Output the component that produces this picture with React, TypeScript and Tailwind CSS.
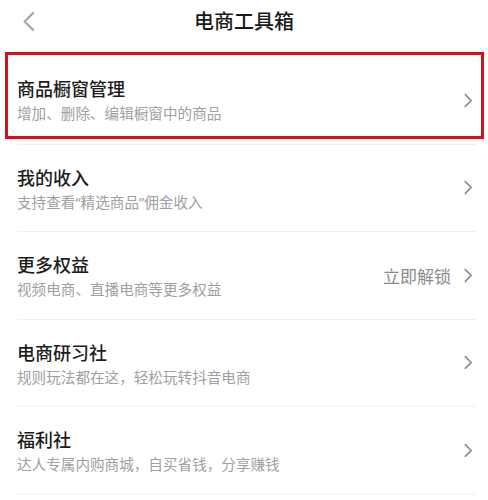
const rows = [
  { title: "商品橱窗管理", sub: "增加、删除、编辑橱窗中的商品" },
  { title: "我的收入", sub: "支持查看“精选商品”佣金收入" },
  { title: "更多权益", sub: "视频电商、直播电商等更多权益", extra: "立即解锁" },
  { title: "电商研习社", sub: "规则玩法都在这，轻松玩转抖音电商" },
  { title: "福利社", sub: "达人专属内购商城，自买省钱，分享赚钱" },
];

function Chevron({ left = false, className = "" }: { left?: boolean; className?: string }) {
  return (
    <svg viewBox="0 0 10 16" className={className} fill="none" stroke="currentColor" strokeWidth={1.8} strokeLinecap="round" strokeLinejoin="round">
      {left ? <path d="M8.5 1.5 2 8l6.5 6.5" /> : <path d="M1.5 1.5 8 8l-6.5 6.5" />}
    </svg>
  );
}

export default function App() {
  return (
    <div
      className="relative w-[488px] h-[500px] overflow-hidden bg-white"
      style={{ fontFamily: '"Noto Sans CJK SC", "Noto Sans", sans-serif' }}
    >
      <header className="relative flex h-[42px] items-center justify-center">
        <Chevron left className="absolute left-[22px] top-[11px] h-[21px] w-[13px] text-[#aaaaaa]" />
        <h1 className="text-[20px] font-medium text-[#1a1a1a]">电商工具箱</h1>
      </header>

      <div className="mt-[15px] flex flex-col">
        {rows.map((r, i) => (
          <div key={r.title} className="ml-[17px] mr-[12px] flex h-[87.5px] items-center border-b border-[#f0f0f0]">
            <div className={`flex flex-1 flex-col ${i === 0 ? "-mt-[2px]" : "mt-[1px]"}`}>
              <span className="text-[18px] font-medium leading-[26px] text-[#1c1c1c]">{r.title}</span>
              <span
                className="mt-[1px] text-[14.6px] leading-[22px] text-[#a0a0a0]"
                style={{ fontFamily: '"Noto Sans", "Noto Sans CJK SC", sans-serif' }}
              >
                {r.sub}
              </span>
            </div>
            {r.extra && <span className="mr-[13px] text-[17px] text-[#8a8a8a]">{r.extra}</span>}
            <Chevron className="mr-[3px] h-[15px] w-[9px] text-[#8a8a8a]" />
          </div>
        ))}
      </div>

      <div className="pointer-events-none absolute left-[5px] top-[52px] h-[87px] w-[479px] border-[3px] border-[#d3121c]" />
    </div>
  );
}
